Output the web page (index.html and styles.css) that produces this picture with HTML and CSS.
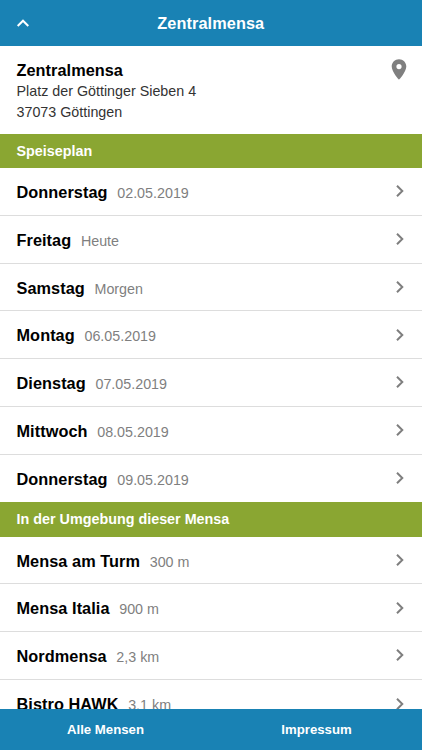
FILE: index.html
```html
<!DOCTYPE html>
<html lang="de">
<head>
  <meta charset="UTF-8" />
  <meta name="viewport" content="width=device-width, initial-scale=1" />
  <title>Zentralmensa</title>
  <link rel="stylesheet" href="styles.css">
</head>
<body>

  <header class="top-bar">
    <svg class="back" viewBox="0 0 14 10"><path d="M1.7 8 L7 2.7 L12.3 8" /></svg>
    <h1>Zentralmensa</h1>
  </header>

  <main>
    <section class="info">
      <div>
        <h2>Zentralmensa</h2>
        <p>Platz der Göttinger Sieben 4<br>37073 Göttingen</p>
      </div>
      <svg class="pin" viewBox="0 0 16 22"><path fill-rule="evenodd" d="M8 .3C3.9.3.7 3.5.7 7.6c0 5.4 7.3 13.2 7.3 13.2S15.3 13 15.3 7.6C15.3 3.5 12.1.3 8 .3zm0 4.7a2.6 2.6 0 1 1 0 5.2 2.6 2.6 0 0 1 0-5.2z" /></svg>
    </section>

    <h3 class="divider">Speiseplan</h3>
    <ul class="list">
      <li><b>Donnerstag</b><span>02.05.2019</span><svg class="arrow" viewBox="0 0 10 14"><path d="M2 1.7 L7.3 7 L2 12.3" /></svg></li>
      <li><b>Freitag</b><span>Heute</span><svg class="arrow" viewBox="0 0 10 14"><path d="M2 1.7 L7.3 7 L2 12.3" /></svg></li>
      <li><b>Samstag</b><span>Morgen</span><svg class="arrow" viewBox="0 0 10 14"><path d="M2 1.7 L7.3 7 L2 12.3" /></svg></li>
      <li><b>Montag</b><span>06.05.2019</span><svg class="arrow" viewBox="0 0 10 14"><path d="M2 1.7 L7.3 7 L2 12.3" /></svg></li>
      <li><b>Dienstag</b><span>07.05.2019</span><svg class="arrow" viewBox="0 0 10 14"><path d="M2 1.7 L7.3 7 L2 12.3" /></svg></li>
      <li><b>Mittwoch</b><span>08.05.2019</span><svg class="arrow" viewBox="0 0 10 14"><path d="M2 1.7 L7.3 7 L2 12.3" /></svg></li>
      <li><b>Donnerstag</b><span>09.05.2019</span><svg class="arrow" viewBox="0 0 10 14"><path d="M2 1.7 L7.3 7 L2 12.3" /></svg></li>
    </ul>

    <h3 class="divider">In der Umgebung dieser Mensa</h3>
    <ul class="list">
      <li><b>Mensa am Turm</b><span>300 m</span><svg class="arrow" viewBox="0 0 10 14"><path d="M2 1.7 L7.3 7 L2 12.3" /></svg></li>
      <li><b>Mensa Italia</b><span>900 m</span><svg class="arrow" viewBox="0 0 10 14"><path d="M2 1.7 L7.3 7 L2 12.3" /></svg></li>
      <li><b>Nordmensa</b><span>2,3 km</span><svg class="arrow" viewBox="0 0 10 14"><path d="M2 1.7 L7.3 7 L2 12.3" /></svg></li>
      <li><b>Bistro HAWK</b><span>3,1 km</span><svg class="arrow" viewBox="0 0 10 14"><path d="M2 1.7 L7.3 7 L2 12.3" /></svg></li>
    </ul>
  </main>

  <footer class="bottom-bar">
    <a>Alle Mensen</a>
    <a>Impressum</a>
  </footer>

</body>
</html>
```

FILE: styles.css
```css
* {
  box-sizing: border-box;
}

html, body {
  height: 100%;
  margin: 0;
  padding: 0;
}

body {
  display: flex;
  flex-direction: column;
  overflow: hidden;
  background: #fff;
  color: #000;
  font-family: "Helvetica Neue", Helvetica, "Liberation Sans", Arial, sans-serif;
}

h1, h2, h3, p, ul {
  margin: 0;
  padding: 0;
}

svg {
  display: block;
  flex: none;
}

.top-bar {
  display: grid;
  grid-template-columns: 30px 1fr 30px;
  align-items: center;
  flex: none;
  height: 46px;
  padding: 0 16px 0 15.5px;
  background: #1982b4;
  color: #fff;
}

.top-bar h1 {
  font-size: 16.3px;
  line-height: 20px;
  letter-spacing: 0.1px;
  text-align: center;
}

.back {
  width: 14px;
  height: 10px;
  fill: none;
  stroke: #fff;
  stroke-width: 2;
}

main {
  flex: 1;
  min-height: 0;
  overflow: hidden;
}

.info {
  display: flex;
  justify-content: space-between;
  height: 87.8px;
  padding: 13px 15px 0 16.5px;
}

.info h2 {
  font-size: 16.3px;
  line-height: 22px;
  letter-spacing: 0.05px;
}

.info p {
  color: #333;
  font-size: 14.3px;
  line-height: 20.5px;
}

.pin {
  width: 16px;
  height: 22px;
  fill: #7f7f7f;
}

.divider {
  height: 34.2px;
  padding-left: 16.5px;
  background: #8aa632;
  color: #fff;
  font-size: 14.35px;
  line-height: 35px;
}

.list {
  list-style: none;
}

.list li {
  display: flex;
  align-items: baseline;
  height: 47.78px;
  padding: 0 17.5px 0 16.5px;
  border-bottom: 1px solid #ddd;
  line-height: 48px;
}

.list li:last-child {
  border-bottom: none;
}

.list b {
  font-size: 16.3px;
  letter-spacing: 0.06px;
}

.list span {
  margin-left: 9.7px;
  color: #7f7f7f;
  font-size: 14.3px;
}

.arrow {
  align-self: center;
  width: 10px;
  height: 14px;
  margin-left: auto;
  fill: none;
  stroke: #7f7f7f;
  stroke-width: 2;
}

.bottom-bar {
  display: flex;
  flex: none;
  height: 41px;
  background: #1982b4;
}

.bottom-bar a {
  flex: 1;
  color: #fff;
  font-size: 13.2px;
  font-weight: bold;
  line-height: 41px;
  text-align: center;
}
```
